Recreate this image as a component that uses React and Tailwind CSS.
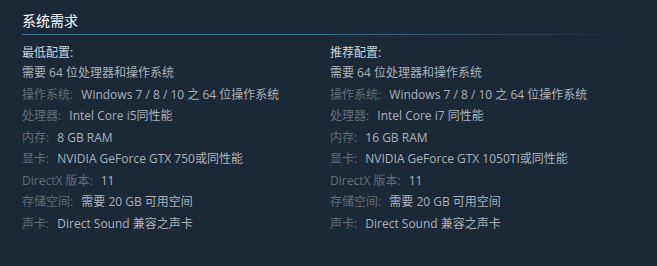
const minimum = [
  ['操作系统', 'Windows 7 / 8 / 10 之 64 位操作系统'],
  ['处理器', 'Intel Core i5同性能'],
  ['内存', '8 GB RAM'],
  ['显卡', 'NVIDIA GeForce GTX 750或同性能'],
  ['DirectX 版本', '11'],
  ['存储空间', '需要 20 GB 可用空间'],
  ['声卡', 'Direct Sound 兼容之声卡'],
];

const recommended = [
  ['操作系统', 'Windows 7 / 8 / 10 之 64 位操作系统'],
  ['处理器', 'Intel Core i7 同性能'],
  ['内存', '16 GB RAM'],
  ['显卡', 'NVIDIA GeForce GTX 1050TI或同性能'],
  ['DirectX 版本', '11'],
  ['存储空间', '需要 20 GB 可用空间'],
  ['声卡', 'Direct Sound 兼容之声卡'],
];

function ReqColumn({ title, rows }) {
  return (
    <div>
      <div className="text-[#c6d4df] leading-[16.5px]">{title}:</div>
      <ul className="mt-[3.5px] flex flex-col gap-[5px]">
        <li className="leading-[16.5px] text-[#acb2b8]">需要 64 位处理器和操作系统</li>
        {rows.map(([label, value]) => (
          <li key={label} className="leading-[16.5px] text-[#acb2b8] whitespace-nowrap">
            <span className="text-[#626d78] mr-[5px]">{label}:</span> {value}
          </li>
        ))}
      </ul>
    </div>
  );
}

export default function App() {
  return (
    <div
      className="w-[657px] h-[266px] bg-[#1b2838] px-[22px] pt-[11px] text-[12px]"
      style={{ fontFamily: '"Open Sans", "Noto Sans CJK SC", sans-serif' }}
    >
      <h2 className="text-[14px] leading-[20px] text-white font-normal pb-[3px]">系统需求</h2>
      <div className="h-px w-[613px] bg-linear-to-r from-[#3c6d8c] via-[#3c6d8c] via-50% to-transparent" />
      <div className="mt-[10px] grid grid-cols-[308px_1fr]">
        <ReqColumn title="最低配置" rows={minimum} />
        <ReqColumn title="推荐配置" rows={recommended} />
      </div>
    </div>
  );
}
